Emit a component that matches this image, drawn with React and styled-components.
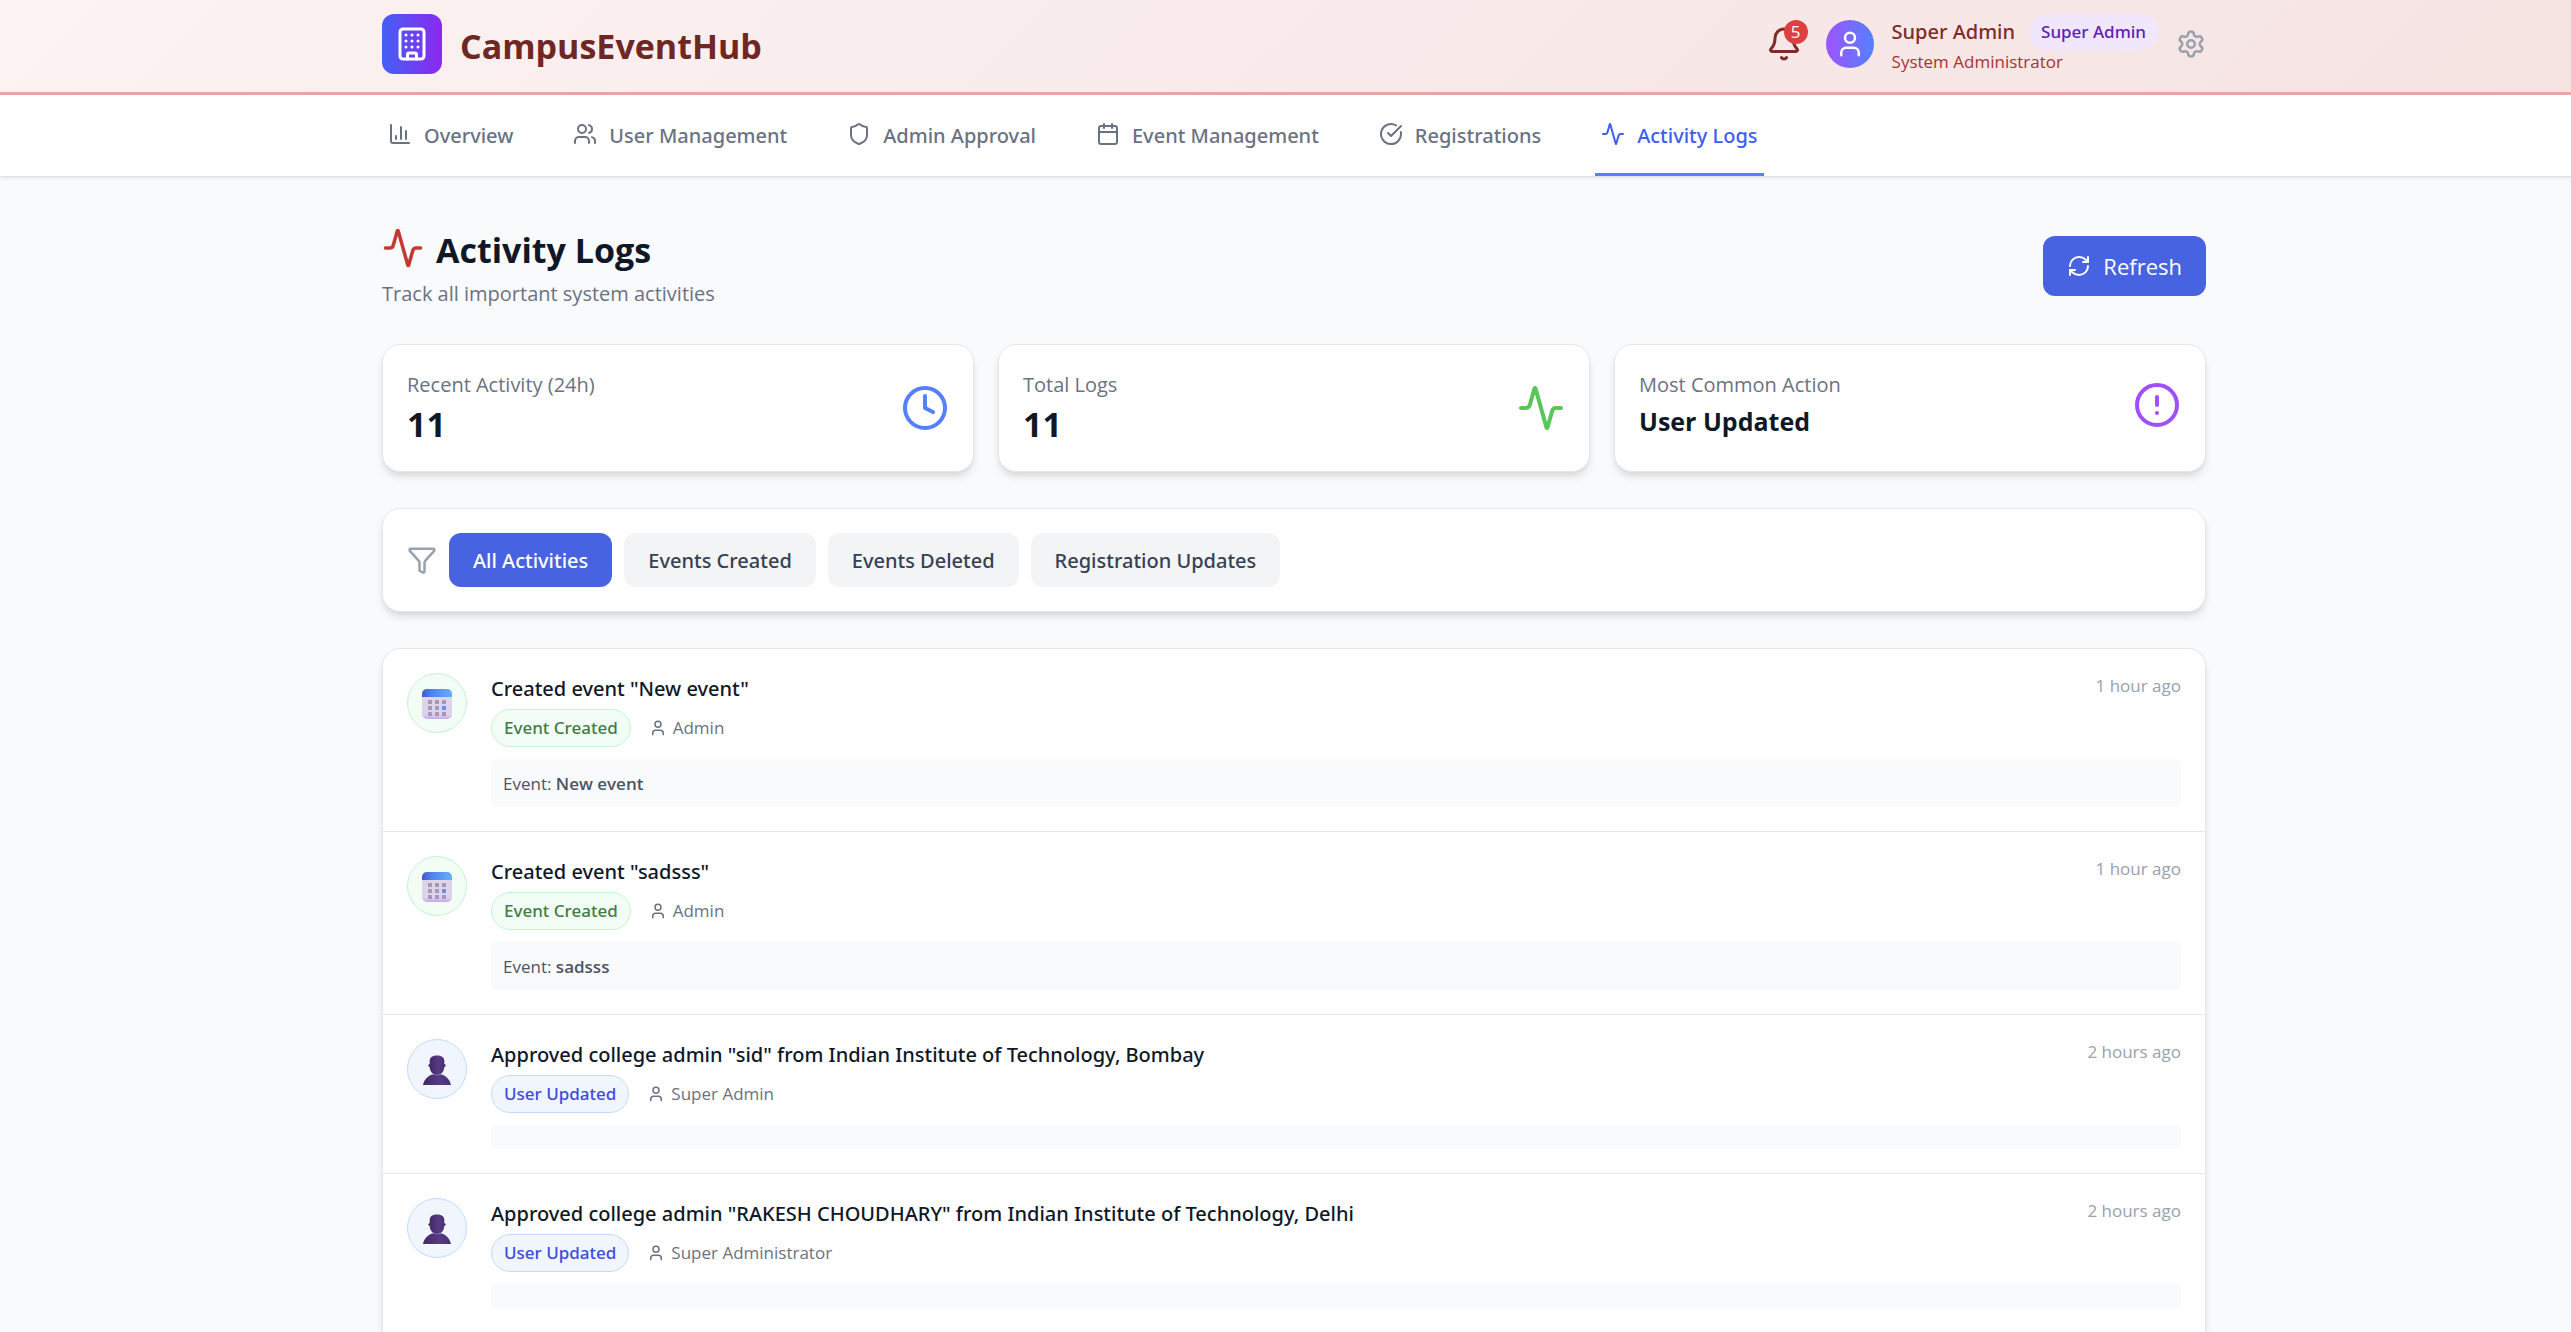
import React from "react";
import styled, { createGlobalStyle } from "styled-components";
import {
  Activity,
  Bell,
  Building,
  Calendar,
  ChartColumn,
  CircleAlert,
  CircleCheckBig,
  Clock,
  Funnel,
  RefreshCw,
  Settings,
  Shield,
  User,
  Users,
} from "lucide-react";

const GlobalStyle = createGlobalStyle`
  *, *::before, *::after { box-sizing: border-box; }
  body {
    margin: 0;
    background: #f9fafc;
    color: #101828;
    font-family: "Open Sans", "Noto Sans", sans-serif;
    font-size: 20px;
    line-height: 30px;
  }
  h1, h2, h3, p, ul { margin: 0; padding: 0; }
  ul { list-style: none; }
  button { border: 0; margin: 0; font: inherit; color: inherit; cursor: pointer; background: none; }
  svg { display: block; flex: none; }
`;

const medium = `
  font-family: "Noto Sans", "Open Sans", sans-serif;
  font-weight: 500;
`;

const Container = styled.div`
  width: 100%;
  max-width: 1937px;
  margin: 0 auto;
  padding: 0 48px 0 65px;
`;

const Header = styled.header`
  background: linear-gradient(135deg, #fcf3f2, #f9ecec 40%, #f5e3e2);
  border-bottom: 3px solid #e8a6a5;
`;

const HeaderRow = styled(Container)`
  display: flex;
  align-items: center;
  justify-content: space-between;
  height: 92px;
  padding-bottom: 4px;
`;

const Brand = styled.div`
  display: flex;
  align-items: center;
  gap: 18px;
`;

const Logo = styled.div`
  display: grid;
  place-items: center;
  width: 60px;
  height: 60px;
  border-radius: 12px;
  color: #fff;
  background: linear-gradient(to right, #4460f5, #8c28ee);
`;

const BrandName = styled.h1`
  padding-top: 4px;
  font-size: 34px;
  line-height: 44px;
  font-weight: 700;
  color: #702724;
`;

const Account = styled.div`
  display: flex;
  align-items: center;
  gap: 18px;
`;

const BellButton = styled.button`
  position: relative;
  margin-right: 6px;
  padding: 0;
  color: #812a26;
`;

const BellCount = styled.span`
  position: absolute;
  top: -6px;
  right: -6px;
  width: 24px;
  height: 24px;
  border-radius: 50%;
  background: #dd4040;
  color: #fff;
  font-size: 17px;
  line-height: 24px;
  text-align: center;
`;

const Avatar = styled.div`
  display: grid;
  place-items: center;
  width: 48px;
  height: 48px;
  border-radius: 50%;
  color: #fff;
  background: linear-gradient(to right, #9f53fd, #5581ff);
`;

const NameRow = styled.div`
  display: flex;
  align-items: center;
  gap: 14px;
  height: 36px;
  ${medium}
  color: #812a26;
`;

const RolePill = styled.span`
  padding: 6px 12px;
  border-radius: 18px;
  background: #f0e7fd;
  color: #5c22ae;
  font-size: 17px;
  line-height: 24px;
`;

const RoleTitle = styled.p`
  font-size: 17px;
  line-height: 24px;
  color: #a5352f;
`;

const IconButton = styled.button`
  padding: 0;
  color: #99a1af;
`;

const Nav = styled.nav`
  background: #fff;
  box-shadow: 0 1px 0 #dfe1e5, 0 2px 4px rgba(0, 0, 0, 0.1);
`;

const NavRow = styled(Container)`
  display: flex;
  gap: 48px;
`;

const Tab = styled.a`
  display: flex;
  align-items: center;
  gap: 12px;
  height: 81px;
  padding: 3px 6px 0;
  border-bottom: 3px solid ${(p) => (p.$active ? "#5580ff" : "transparent")};
  color: ${(p) => (p.$active ? "#405cf5" : "#6a7282")};
  ${medium}
  text-decoration: none;
  white-space: nowrap;
  svg { margin-bottom: 3px; }
`;

const Main = styled(Container)`
  display: flex;
  flex-direction: column;
  gap: 36px;
  padding-top: 48px;
`;

const PageHead = styled.div`
  display: flex;
  align-items: center;
  justify-content: space-between;
`;

const PageTitle = styled.h2`
  display: flex;
  align-items: center;
  gap: 12px;
  margin-bottom: 6px;
  font-size: 34px;
  line-height: 44px;
  font-weight: 700;
  svg { color: #c23a31; }
  span { padding-top: 4px; }
`;

const Muted = styled.p`
  padding-top: 2px;
  line-height: 28px;
  color: #6a7282;
`;

const RefreshButton = styled.button`
  display: flex;
  align-items: center;
  gap: 12px;
  height: 60px;
  padding: 0 24px;
  border-radius: 12px;
  background: #4763e1;
  color: #fff;
  font-size: 22px;
`;

const Card = styled.section`
  border: 1px solid #e5e7eb;
  border-radius: 18px;
  background: #fff;
  box-shadow: 0 6px 9px -1px rgba(0, 0, 0, 0.1), 0 3px 6px -3px rgba(0, 0, 0, 0.1);
`;

const Stats = styled.div`
  display: grid;
  grid-template-columns: repeat(3, 1fr);
  gap: 24px;
`;

const StatBody = styled.div`
  display: flex;
  align-items: center;
  justify-content: space-between;
  padding: 24px;
  svg { color: ${(p) => p.$tint}; }
`;

const StatValue = styled.p`
  padding-top: 2px;
  font-size: ${(p) => (p.$small ? "25px" : "34px")};
  line-height: ${(p) => (p.$small ? "40px" : "46px")};
  font-weight: 700;
`;

const Filters = styled(Card)`
  display: flex;
  align-items: center;
  gap: 12px;
  padding: 24px;
  > svg { color: #99a1af; }
`;

const FilterButton = styled.button`
  height: 54px;
  padding: 2px 24px 0;
  border-radius: 12px;
  background: ${(p) => (p.$active ? "#4763e1" : "#f3f4f6")};
  color: ${(p) => (p.$active ? "#fff" : "#364153")};
  ${medium}
`;

const LogCard = styled(Card)`
  border-bottom: 0;
  border-radius: 18px 18px 0 0;
`;

const LogRow = styled.li`
  display: flex;
  gap: 24px;
  padding: 24px;
  & + & { border-top: 1px solid #e5e7eb; }
`;

const tones = {
  green: { bg: "#f2fdf5", line: "#c6f3d2", text: "#417c45" },
  blue: { bg: "#f0f5fe", line: "#c5dafc", text: "#3d4cd8" },
};

const LogIcon = styled.div`
  display: grid;
  place-items: center;
  flex: none;
  width: 60px;
  height: 60px;
  padding-top: 2px;
  border: 1px solid ${(p) => tones[p.$tone].line};
  border-radius: 50%;
  background: ${(p) => tones[p.$tone].bg};
`;

const LogBody = styled.div`
  flex: 1;
  min-width: 0;
`;

const LogHead = styled.div`
  display: flex;
  align-items: flex-start;
  justify-content: space-between;
  margin-bottom: 6px;
`;

const LogTitle = styled.h3`
  padding-top: 2px;
  font-size: 20px;
  line-height: 28px;
  ${medium}
`;

const LogTime = styled.time`
  color: #99a1af;
  font-size: 17px;
  line-height: 26px;
`;

const LogMeta = styled.div`
  display: flex;
  align-items: center;
  gap: 18px;
  margin-bottom: 12px;
`;

const Badge = styled.span`
  padding: 6px 12px;
  border: 1px solid ${(p) => tones[p.$tone].line};
  border-radius: 19px;
  background: ${(p) => tones[p.$tone].bg};
  color: ${(p) => tones[p.$tone].text};
  font-size: 17px;
  line-height: 24px;
  ${medium}
`;

const Actor = styled.span`
  display: flex;
  align-items: center;
  gap: 6px;
  color: #6a7282;
  font-size: 17px;
  line-height: 24px;
`;

const Detail = styled.div`
  padding: 13px 12px 11px;
  border-radius: 6px;
  background: #f9fafb;
  color: #4a5565;
  font-size: 17px;
  line-height: 24px;
  strong { font-weight: 600; }
`;

function CalendarEmoji() {
  return (
    <svg width="30" height="30" viewBox="0 0 30 30" aria-hidden="true">
      <defs>
        <linearGradient id="calTop" x1="0" x2="1">
          <stop offset="0" stopColor="#4657cf" />
          <stop offset="0.35" stopColor="#4f86ee" />
          <stop offset="1" stopColor="#66aef9" />
        </linearGradient>
        <linearGradient id="calBody" x1="0" x2="0" y1="0" y2="1">
          <stop offset="0" stopColor="#ddd5e8" />
          <stop offset="0.85" stopColor="#ddd3ec" />
          <stop offset="1" stopColor="#c7a6ea" />
        </linearGradient>
      </defs>
      <rect width="30" height="30" rx="5" fill="url(#calBody)" />
      <path d="M0 8V5a5 5 0 0 1 5-5h20a5 5 0 0 1 5 5v3z" fill="url(#calTop)" />
      {[11, 17, 23].map((y) =>
        [6, 13, 20].map((x) => (
          <rect
            key={`${x}-${y}`}
            x={x}
            y={y}
            width="4"
            height="4"
            rx="0.6"
            fill={x === 20 && y === 17 ? "#5c93ee" : "#a597b6"}
          />
        ))
      )}
    </svg>
  );
}

function PersonEmoji() {
  return (
    <svg width="30" height="30" viewBox="0 0 30 30" aria-hidden="true">
      <defs>
        <linearGradient id="person" x1="0" x2="1">
          <stop offset="0" stopColor="#412a63" />
          <stop offset="0.6" stopColor="#563a86" />
          <stop offset="1" stopColor="#4a3273" />
        </linearGradient>
      </defs>
      <ellipse cx="15" cy="10.5" rx="8.8" ry="2.4" fill="#3b265c" />
      <path
        d="M15 0.500C19 0.500 22.300 2 22.300 6V11C22.300 16.500 19.500 20 15 20S7.700 16.500 7.700 11V6C7.700 2 11 0.500 15 0.500Z"
        fill="url(#person)"
      />
      <path d="M1 30C2.200 24.500 6 20.300 11.500 19.300Q15 21.200 18.500 19.300C24 20.300 27.800 24.500 29 30Z" fill="url(#person)" />
    </svg>
  );
}

const tabs = [
  ["Overview", ChartColumn],
  ["User Management", Users],
  ["Admin Approval", Shield],
  ["Event Management", Calendar],
  ["Registrations", CircleCheckBig],
  ["Activity Logs", Activity],
];

const stats = [
  { label: "Recent Activity (24h)", value: "11", Icon: Clock, tint: "#5580ff" },
  { label: "Total Logs", value: "11", Icon: Activity, tint: "#5ac55a" },
  { label: "Most Common Action", value: "User Updated", Icon: CircleAlert, tint: "#a050f8", small: true },
];

const filters = ["All Activities", "Events Created", "Events Deleted", "Registration Updates"];

const logs = [
  { kind: "event", title: 'Created event "New event"', actor: "Admin", time: "1 hour ago", event: "New event" },
  { kind: "event", title: 'Created event "sadsss"', actor: "Admin", time: "1 hour ago", event: "sadsss" },
  {
    kind: "user",
    title: 'Approved college admin "sid" from Indian Institute of Technology, Bombay',
    actor: "Super Admin",
    time: "2 hours ago",
  },
  {
    kind: "user",
    title: 'Approved college admin "RAKESH CHOUDHARY" from Indian Institute of Technology, Delhi',
    actor: "Super Administrator",
    time: "2 hours ago",
  },
];

const kinds = {
  event: { label: "Event Created", tone: "green", Emoji: CalendarEmoji },
  user: { label: "User Updated", tone: "blue", Emoji: PersonEmoji },
};

function LogEntry({ log }) {
  const { label, tone, Emoji } = kinds[log.kind];
  return (
    <LogRow>
      <LogIcon $tone={tone}>
        <Emoji />
      </LogIcon>
      <LogBody>
        <LogHead>
          <LogTitle>{log.title}</LogTitle>
          <LogTime>{log.time}</LogTime>
        </LogHead>
        <LogMeta>
          <Badge $tone={tone}>{label}</Badge>
          <Actor>
            <User size={18} />
            {log.actor}
          </Actor>
        </LogMeta>
        <Detail>
          {log.event && (
            <>
              Event: <strong>{log.event}</strong>
            </>
          )}
        </Detail>
      </LogBody>
    </LogRow>
  );
}

export default function App() {
  return (
    <>
      <GlobalStyle />
      <Header>
        <HeaderRow>
          <Brand>
            <Logo>
              <Building size={36} />
            </Logo>
            <BrandName>CampusEventHub</BrandName>
          </Brand>
          <Account>
            <BellButton aria-label="Notifications">
              <Bell size={36} />
              <BellCount>5</BellCount>
            </BellButton>
            <Avatar>
              <User size={30} />
            </Avatar>
            <div>
              <NameRow>
                Super Admin
                <RolePill>Super Admin</RolePill>
              </NameRow>
              <RoleTitle>System Administrator</RoleTitle>
            </div>
            <IconButton aria-label="Settings">
              <Settings size={30} />
            </IconButton>
          </Account>
        </HeaderRow>
      </Header>
      <Nav>
        <NavRow>
          {tabs.map(([label, Icon]) => (
            <Tab key={label} href="#" $active={label === "Activity Logs"}>
              <Icon size={24} />
              {label}
            </Tab>
          ))}
        </NavRow>
      </Nav>
      <Main as="main">
        <PageHead>
          <div>
            <PageTitle>
              <Activity size={42} />
              <span>Activity Logs</span>
            </PageTitle>
            <Muted>Track all important system activities</Muted>
          </div>
          <RefreshButton>
            <RefreshCw size={24} />
            Refresh
          </RefreshButton>
        </PageHead>
        <Stats>
          {stats.map(({ label, value, Icon, tint, small }) => (
            <Card key={label}>
              <StatBody $tint={tint}>
                <div>
                  <Muted>{label}</Muted>
                  <StatValue $small={small}>{value}</StatValue>
                </div>
                <Icon size={48} />
              </StatBody>
            </Card>
          ))}
        </Stats>
        <Filters>
          <Funnel size={30} />
          {filters.map((label, i) => (
            <FilterButton key={label} $active={i === 0}>
              {label}
            </FilterButton>
          ))}
        </Filters>
        <LogCard>
          <ul>
            {logs.map((log) => (
              <LogEntry key={log.title} log={log} />
            ))}
          </ul>
        </LogCard>
      </Main>
    </>
  );
}
